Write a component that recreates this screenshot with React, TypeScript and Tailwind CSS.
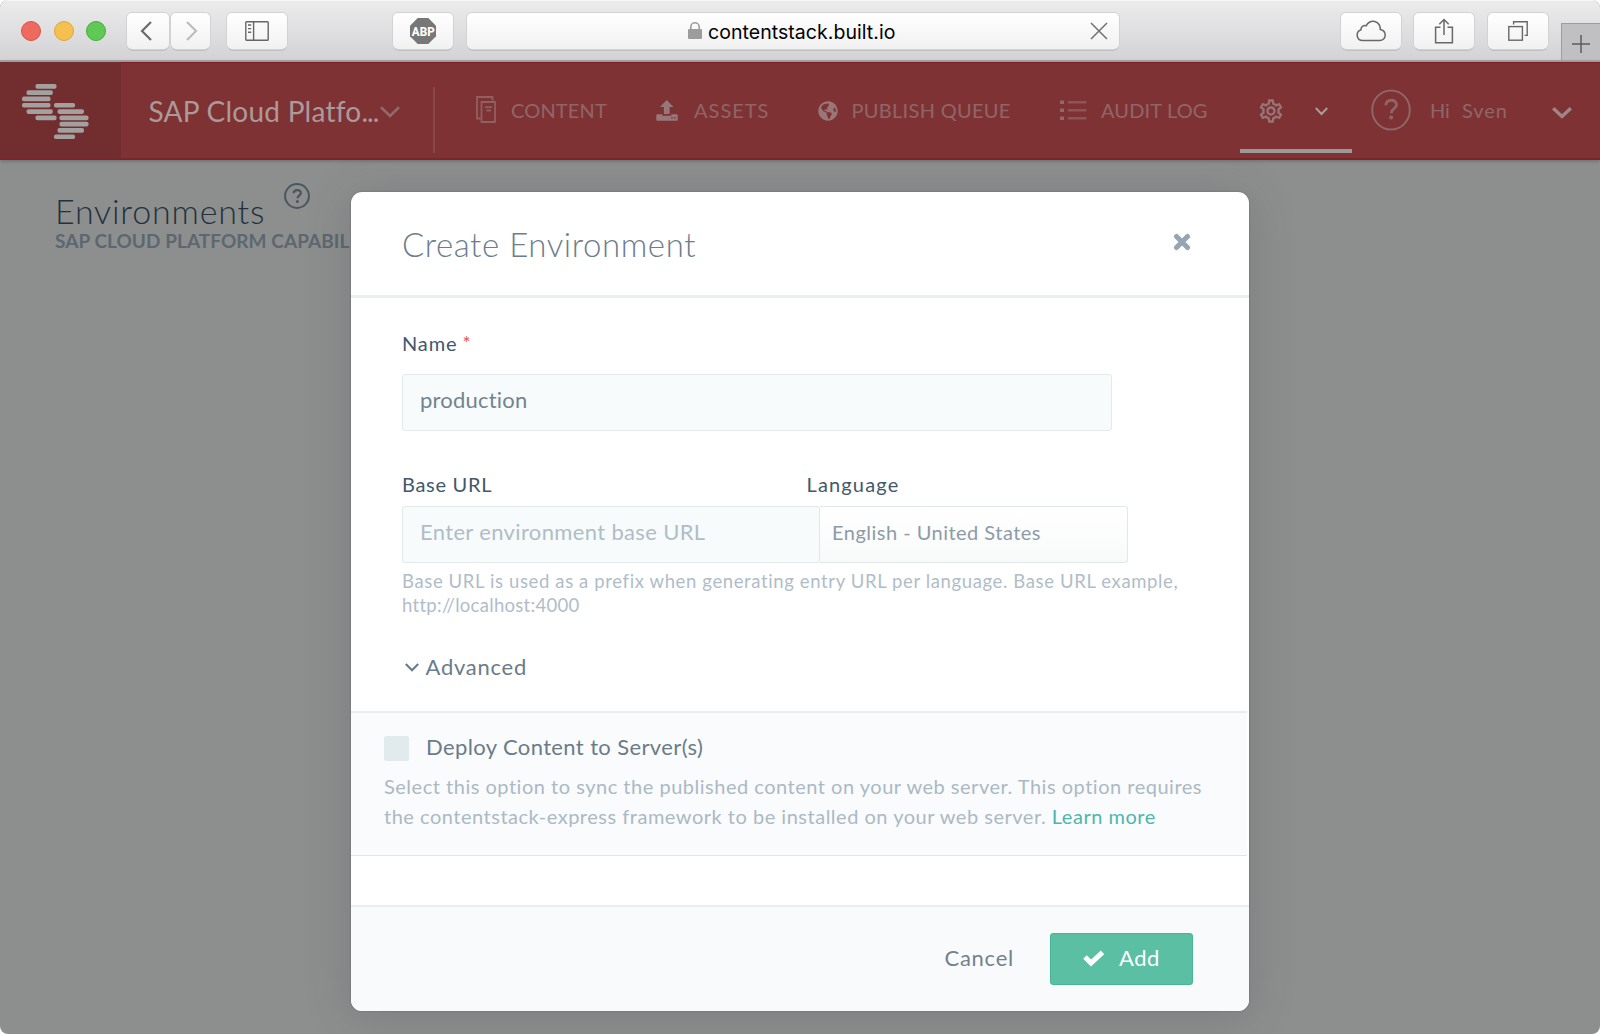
import type { ReactNode } from "react";
import { FaGlobeAmericas } from "react-icons/fa";
import { MdOutlineSettings } from "react-icons/md";

function ToolButton({ className, children }: { className: string; children: ReactNode }) {
  return (
    <div
      className={`flex h-9 shrink-0 items-center justify-center rounded-[5px] bg-gradient-to-b from-white to-[#f1f1f1] shadow-[0_0_0_1px_#d2d2d3,0_1.5px_0_0_#a9a9ab] ${className}`}
    >
      {children}
    </div>
  );
}

function Toolbar() {
  return (
    <div className="flex h-[62px] shrink-0 border-b-2 border-[#a6a6a8] bg-gradient-to-b from-[#ececed] to-[#d3d3d5] pt-[13px] shadow-[inset_0_1px_0_#f7f7f7]">
      <div className="ml-[21px] mt-2 flex gap-[12.5px]">
        <span className="size-5 rounded-full border border-[#dc5048] bg-[#ee6a5f]" />
        <span className="size-5 rounded-full border border-[#dfa53a] bg-[#f5c04f]" />
        <span className="size-5 rounded-full border border-[#44ab39] bg-[#60c955]" />
      </div>
      <ToolButton className="ml-[21px] w-[42px]">
        <svg width="12" height="20" viewBox="0 0 12 20" className="-ml-[4px]" fill="none" stroke="#6b6b6b" strokeWidth="2.2">
          <path d="M11 1 2 10l9 9" />
        </svg>
      </ToolButton>
      <ToolButton className="ml-[2px] w-[39px]">
        <svg width="12" height="20" viewBox="0 0 12 20" className="ml-[3px]" fill="none" stroke="#bdbdbd" strokeWidth="2.2">
          <path d="m1 1 9 9-9 9" />
        </svg>
      </ToolButton>
      <ToolButton className="ml-[17px] w-[60px]">
        <svg width="24" height="20" viewBox="0 0 24 20" fill="none" stroke="#666" strokeWidth="1.4">
          <rect x=".8" y=".8" width="22.4" height="18.4" rx=".8" />
          <path d="M8.6 1v18M3 4h3.2M3 7.6h3.2M3 11.2h3.2" />
        </svg>
      </ToolButton>
      <ToolButton className="ml-[106px] w-[60px]">
        <div className="relative flex size-[26px] items-center justify-center">
          <svg width="26" height="26" viewBox="0 0 26 26" className="absolute inset-0">
            <path d="M7.7 0h10.6L26 7.700v10.600L18.300 26H7.700L0 18.300V7.700z" fill="#777" />
          </svg>
          <span className="relative scale-x-[0.860] font-['Roboto',sans-serif] text-[13.500px] font-extrabold leading-[18px] text-white">
            ABP
          </span>
        </div>
      </ToolButton>
      <div className="ml-[14px] flex h-9 w-[652px] items-center rounded-[5px] bg-gradient-to-b from-white to-[#f1f1f1] pl-[221px] shadow-[0_0_0_1px_#d2d2d3,0_1.5px_0_0_#a9a9ab]">
        <svg width="14" height="17" viewBox="0 0 14 17" className="-mt-px">
          <rect y="7" width="14" height="10" rx="1" fill="#9c9c9c" />
          <path d="M2.8 8V5a4.2 4.2 0 0 1 8.4 0v3" fill="none" stroke="#9c9c9c" strokeWidth="1.6" />
        </svg>
        <span className="ml-[6px] mt-[3px] w-[370px] font-['Inter',sans-serif] text-[19.5px] tracking-[0.05px] text-black">
          contentstack.built.io
        </span>
        <svg width="18" height="18" viewBox="0 0 18 18" className="ml-[12px]" fill="none" stroke="#707070" strokeWidth="1.5">
          <path d="m1 1 16 16M17 1 1 17" />
        </svg>
      </div>
      <ToolButton className="ml-[222px] w-[60px]">
        <svg width="30" height="22" viewBox="0 0 30 22" fill="none" stroke="#686868" strokeWidth="1.5">
          <path d="M6.6 20.6A5.6 5.6 0 0 1 5 9.7C4.8 6.8 7.6 4.8 10.200 5.800A7.300 7.300 0 0 1 24.200 9.500C27 10 29.200 12.200 29.200 15.200A5.500 5.500 0 0 1 23.800 20.600z" />
        </svg>
      </ToolButton>
      <ToolButton className="ml-[13px] w-[60px]">
        <svg width="20" height="26" viewBox="0 0 20 26" className="-mt-px" fill="none" stroke="#686868" strokeWidth="1.5">
          <path d="M6.500 9.200H1.600v15.500h16.800V9.200h-4.900M10 17V1.500M5.300 6.200 10 1.500l4.700 4.700" />
        </svg>
      </ToolButton>
      <ToolButton className="ml-[13.500px] w-[60px]">
        <svg width="20" height="20" viewBox="0 0 20 20" fill="none" stroke="#686868" strokeWidth="1.4">
          <rect x=".8" y="5.600" width="13.600" height="13.600" />
          <path d="M5.600 3.400V.8h13.600v13.600h-2.600" />
        </svg>
      </ToolButton>
      <div className="ml-auto mt-[10px] flex w-[39px] items-center justify-center border-l border-t border-[#9d9d9f] bg-[#c0c0c2]">
        <svg width="18" height="18" viewBox="0 0 18 18" className="mt-[3px]" fill="none" stroke="#5c5c5d" strokeWidth="1.500">
          <path d="M9 0v18M0 9h18" />
        </svg>
      </div>
    </div>
  );
}

const logoBars: [number, number, number][] = [
  [13.5, 0, 21],
  [4.500, 6.300, 26.300],
  [0, 12.600, 28.500],
  [0, 18.900, 28.500],
  [32, 18.900, 21],
  [4.500, 25.200, 26.300],
  [35.500, 25.200, 26.500],
  [13.500, 31.500, 21],
  [37.500, 31.500, 29],
  [37.500, 37.800, 29],
  [35.500, 44.100, 26.500],
  [32, 50.400, 21],
];

function Header() {
  return (
    <div className="z-10 flex h-[98px] shrink-0 items-center border-b-2 border-[#7a2529] bg-[#7f3234] text-[20px] leading-6 text-[#8f6668] shadow-[0_1px_4px_rgba(0,0,0,0.25),inset_0_1px_0_#7b2023]">
      <div className="flex h-full w-[121px] shrink-0 items-center bg-[#722d2f] pl-[21.500px] pt-[4px]">
        <svg width="67" height="56" viewBox="0 0 67 56" fill="#a3a09f">
          {logoBars.map(([x, y, w]) => (
            <rect key={`${x}-${y}`} x={x} y={y} width={w} height="4.700" rx="1.800" />
          ))}
        </svg>
      </div>
      <div className="ml-[27.500px] mt-px w-[238px] shrink-0 whitespace-nowrap text-[28px] leading-9 tracking-[0.250px] text-[#ab9a9a]">
        SAP Cloud Platfo<span className="tracking-[-1px]">...</span>
      </div>
      <svg width="20" height="12" viewBox="0 0 20 12" className="-ml-[7px] mt-[3px] shrink-0" fill="none" stroke="#926a6c" strokeWidth="2.600">
        <path d="m1 1.200 9 8.800 9-8.800" />
      </svg>
      <div className="ml-[33px] mt-5 h-[66px] w-[2px] shrink-0 bg-[#8b4648]" />
      <div className="ml-[41.500px] flex w-[180px] shrink-0 items-center">
        <svg width="20" height="27" viewBox="0 0 20 27" className="-mt-[2px]" fill="none" stroke="#8f6062" strokeWidth="1.800">
          <path d="M4.500 22.500H1V1h15.500v3.500" />
          <path d="M5.500 6H19v20H5.500zM9 11.200h7M10.500 14.500h4.500" />
        </svg>
        <span className="ml-[15px] tracking-[0.150px]">CONTENT</span>
      </div>
      <div className="flex w-[162px] shrink-0 items-center">
        <svg width="22" height="21" viewBox="0 0 22 21" fill="#997779">
          <path d="M10.700 0 17.500 7H13.600v7H7.900V7H4z" />
          <path fillRule="evenodd" d="M1.300 14.200h5v1.500h9v-1.500h5.400q1 0 1 1v4.500q0 1-1 1H1.300q-1 0-1-1v-4.500q0-1 1-1zM15.300 17v1.600h1.400V17zm2.800 0v1.600h1.400V17z" />
        </svg>
        <span className="ml-[16px] tracking-[1px]">ASSETS</span>
      </div>
      <div className="flex w-[242px] shrink-0 items-center">
        <FaGlobeAmericas size={20} color="#997779" className="-ml-[0.500px] mt-px" />
        <span className="ml-[14px] tracking-[0.300px]">PUBLISH QUEUE</span>
      </div>
      <div className="flex w-[180px] shrink-0 items-center">
        <svg width="27" height="21" viewBox="0 0 27 21" className="mt-px">
          <path d="M0 .5h4v3.500H0zM0 8.500h4V12H0zM0 16.500h4V20H0z" fill="#90686a" />
          <path d="M9 2.200h16.500M9 10.200h16.500M9 18.200h16.500" stroke="#8a5557" strokeWidth="2.600" strokeLinecap="round" />
        </svg>
        <span className="ml-[14px] tracking-[0.150px]">AUDIT LOG</span>
      </div>
      <div className="flex h-full w-[112px] shrink-0 items-center pl-[17.500px] shadow-[inset_0_-5px_0_#7f3234,inset_0_-9px_0_#9d9998]">
        <MdOutlineSettings size={28} color="#977476" className="-ml-px mt-[2px]" />
        <svg width="13" height="9" viewBox="0 0 13 9" className="ml-[30px] mt-[3px]" fill="none" stroke="#a89f9e" strokeWidth="1.900">
          <path d="m.8 1 5.700 6L12.200 1" />
        </svg>
      </div>
      <svg width="40" height="42" viewBox="0 0 40 42" className="ml-[19px] shrink-0">
        <ellipse cx="20" cy="21" rx="18.800" ry="19.600" fill="none" stroke="#8f6668" strokeWidth="2" />
        <path d="M14.800 16.200c0-6.600 10.800-6.600 10.800-.4 0 4-5.400 3.800-5.400 8.400" fill="none" stroke="#8f6668" strokeWidth="2.900" />
        <circle cx="20.100" cy="28.600" r="2" fill="#8f6668" />
      </svg>
      <span className="ml-[19px] w-[32px] shrink-0">Hi</span>
      <span className="w-[90px] shrink-0 tracking-[0.900px]">Sven</span>
      <svg width="20" height="12" viewBox="0 0 20 12" className="mt-[6px] shrink-0" fill="none" stroke="#a08586" strokeWidth="3.400">
        <path d="m1.200 1.200 8.800 8.300 8.800-8.300" />
      </svg>
    </div>
  );
}

function CreateEnvironmentModal() {
  return (
    <div className="absolute left-[351px] top-[32px] flex h-[819px] w-[898px] flex-col overflow-hidden rounded-[11px] bg-white shadow-[0_5px_44px_rgba(70,70,85,0.260),0_0_2px_rgba(0,0,0,0.250)]">
      <div className="flex h-[106px] shrink-0 items-start justify-between border-b-[3px] border-[#e9eff0] pl-[51px] pr-[58.500px] pt-[32px]">
        <h2 className="text-[33px] font-light leading-10 tracking-[0.560px] text-[#6d7d8c]">Create Environment</h2>
        <svg width="18" height="18" viewBox="0 0 18 18" className="mt-[9px]" stroke="#96a5b2" strokeWidth="5" strokeLinecap="round">
          <path d="m3.500 3.500 11 11M14.500 3.500l-11 11" />
        </svg>
      </div>

      <div className="px-[51px] pt-[32.500px] text-[20px] leading-6 text-[#43586a]">
        <div className="flex">
          <span className="tracking-[0.900px]">Name</span>
          <span className="ml-[5px] text-[19px] text-[#e8534f]">*</span>
        </div>
        <div className="mt-[19px] flex h-[57px] w-[710px] items-center rounded-[3px] border-[1.500px] border-[#e3eaeb] bg-[#f7fbfc] pb-[5px] pl-[17px] text-[22px] tracking-[0.200px] text-[#74838f]">
          production
        </div>
        <div className="mt-[41px] flex">
          <span className="w-[404.500px] tracking-[0.700px]">Base URL</span>
          <span className="tracking-[1.150px]">Language</span>
        </div>
        <div className="mt-[10px] flex h-[57px]">
          <div className="flex w-[418px] items-center rounded-[3px] border border-[#e0e8e9] bg-[#f7fbfc] pb-[5px] pl-[17px] text-[22px] tracking-[0.350px] text-[#b0bdc7]">
            Enter environment base URL
          </div>
          <div className="flex w-[308px] items-center rounded-r-[3px] border border-l-0 border-[#e0e8e9] bg-gradient-to-b from-white to-[#f8faf9] pb-[4px] pl-[12px] tracking-[0.480px] text-[#8d9ba8]">
            English - United States
          </div>
        </div>
        <p className="mt-[6px] whitespace-nowrap text-[18.500px] leading-[24.500px] tracking-[0.620px] text-[#b0bdc8]">
          Base URL is used as a prefix when generating entry URL per language. Base URL example,
          <br />
          <span className="tracking-[0.300px]">http://localhost:4000</span>
        </p>
        <div className="mt-[35.500px] flex items-center text-[22px] leading-7 tracking-[0.750px] text-[#6a7b89]">
          <svg width="14" height="9" viewBox="0 0 14 9" className="ml-[2.500px]" fill="none" stroke="#6a7b89" strokeWidth="2.100">
            <path d="m.8 1 6.200 6.200L13.200 1" />
          </svg>
          <span className="ml-[7px]">Advanced</span>
        </div>
      </div>

      <div className="mb-[49px] mr-[2px] mt-auto h-[145px] shrink-0 border-b border-t-2 border-b-[#dfe8e8] border-t-[#e8edef] bg-[#fafbfd] pl-[33px] pt-[23px]">
        <div className="flex h-[25px]">
          <span className="size-[25px] rounded-[2px] bg-[#e1eaec]" />
          <span className="-mt-[2px] ml-[17px] text-[22px] leading-[25px] tracking-[0.380px] text-[#6a7b89]">
            Deploy Content to Server(s)
          </span>
        </div>
        <p className="mt-[11px] whitespace-nowrap text-[20px] leading-[29.500px] tracking-[0.510px] text-[#abb9c4]">
          Select this option to sync the published content on your web server. This option requires
          <br />
          the contentstack-express framework to be installed on your web server.{" "}
          <span className="text-[#4fb5ad]">Learn more</span>
        </p>
      </div>

      <div className="flex h-[106px] shrink-0 justify-end border-t-2 border-[#e9efef] bg-[#f9fafc] pr-[56px] pt-[26px] text-[22px]">
        <span className="pt-[10px] leading-[30px] tracking-[0.750px] text-[#73828f]">Cancel</span>
        <div className="ml-[36px] flex h-[52px] w-[143px] rounded-[3px] border border-[#45b795] bg-[#5bbfa3] pl-[32px] text-white">
          <svg width="22" height="17" viewBox="0 0 22 17" className="mt-[16px]" fill="none" stroke="#fff" strokeWidth="5">
            <path d="m2 7 6 6L19.500 2.300" strokeLinejoin="miter" />
          </svg>
          <span className="ml-[14px] pt-[9px] leading-[30px] tracking-[0.500px]">Add</span>
        </div>
      </div>
    </div>
  );
}

export default function App() {
  return (
    <div className="h-[1034px] w-[1600px] overflow-hidden bg-white">
      <div className="flex h-full flex-col overflow-hidden rounded-[8px] bg-[#8d8f8e] font-['Lato',sans-serif]">
        <Toolbar />
        <Header />
        <main className="relative grow">
          <div className="w-[295px] pl-[56px] pt-[27px]">
            <div className="flex">
              <h1 className="-ml-px w-[229px] shrink-0 text-[34px] font-light leading-[48px] tracking-[0.800px] text-[#24313d]">
                Environments
              </h1>
              <svg width="26" height="26" viewBox="0 0 26 26" className="-mt-[4px] shrink-0">
                <circle cx="13" cy="13" r="11.900" fill="none" stroke="#4b5660" strokeWidth="2" />
                <path d="M9.700 10.300c0-4.300 7.100-4.300 7.100-.3 0 2.600-3.300 2.600-3.300 5.200" fill="none" stroke="#4b5660" strokeWidth="2.300" />
                <circle cx="13.400" cy="18.400" r="1.500" fill="#4b5660" />
              </svg>
            </div>
            <p className="-ml-px -mt-[6px] whitespace-nowrap text-[19px] font-bold leading-6 tracking-[0.050px] text-[#5c6770]">
              SAP CLOUD PLATFORM CAPABIL
            </p>
          </div>
          <CreateEnvironmentModal />
        </main>
      </div>
    </div>
  );
}
